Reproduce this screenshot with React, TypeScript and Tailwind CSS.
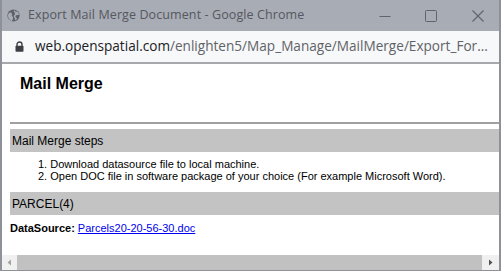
import React from "react";

export default function App() {
  return (
    <div className="w-[501px] h-[271px] flex flex-col overflow-hidden border-l-2 border-r-2 border-b border-[#8e9198] bg-white">
      {/* Title bar */}
      <div className="h-[31px] shrink-0 bg-[#a8acb5] flex items-center" style={{ fontFamily: '"Open Sans", "Noto Sans", sans-serif' }}>
        <svg width="13" height="13" viewBox="0 0 16 16" className="ml-[5px] shrink-0">
          <circle cx="8" cy="8" r="7.5" fill="#5e6269" />
          <path d="M3 4.5 C5 4 6.5 5 6 7 C5.5 8.5 7 9 7.5 10.5 C7.8 12 6.5 13.5 6 15 C3 14 1 11 1.2 7.5 C1.5 6 2.2 5 3 4.5 Z" fill="#a8acb5" />
          <path d="M9 1.2 C9.5 3 11 3.5 12.5 3.2 C13.5 4 14.5 5.5 14.8 7 C13 7.5 11.5 7 10.5 8.5 C10 10 11.5 11 12.5 11.5 C12 12.5 11 13.5 10 14.2 C10.5 12 9 11 8.5 9.5 C8 8 9.5 7 10 6 C10.5 5 9 4 8.5 3 C8.3 2.3 8.5 1.6 9 1.2 Z" fill="#a8acb5" />
        </svg>
        <span className="ml-[8px] text-[12.5px] text-[#55585e] tracking-[0.1px] whitespace-nowrap">Export Mail Merge Document - Google Chrome</span>
        <div className="ml-auto flex items-center shrink-0">
          <svg width="12" height="12" viewBox="0 0 12 12" className="mr-[34px]">
            <line x1="0.5" y1="6.5" x2="11.5" y2="6.5" stroke="#5f636a" strokeWidth="1" />
          </svg>
          <svg width="12" height="12" viewBox="0 0 12 12" className="mr-[35px]">
            <rect x="0.5" y="0.5" width="11" height="11" rx="1" fill="none" stroke="#5f636a" strokeWidth="1" />
          </svg>
          <svg width="12" height="12" viewBox="0 0 12 12" className="mr-[15px]">
            <line x1="0.5" y1="0.5" x2="11.5" y2="11.5" stroke="#5f636a" strokeWidth="1.1" />
            <line x1="11.5" y1="0.5" x2="0.5" y2="11.5" stroke="#5f636a" strokeWidth="1.1" />
          </svg>
        </div>
      </div>
      {/* Address bar */}
      <div className="h-[33px] shrink-0 bg-[#f7f8f9] border-b-2 border-[#a6a8ab] flex items-center overflow-hidden" style={{ fontFamily: '"Open Sans", "Noto Sans", sans-serif' }}>
        <svg width="9" height="11" viewBox="0 0 9 11" className="ml-[13px] shrink-0">
          <path d="M2 5 V3.5 A2.5 2.5 0 0 1 7 3.5 V5" fill="none" stroke="#3c3f43" strokeWidth="1.4" />
          <rect x="0.5" y="4.8" width="8" height="6" rx="0.8" fill="#3c3f43" />
        </svg>
        <span className="ml-[11px] text-[13.6px] whitespace-nowrap">
          <span className="text-[#202124]">web.openspatial.com</span>
          <span className="text-[#5f6368]">/enlighten5/Map_Manage/MailMerge/Export_For...</span>
        </span>
      </div>
      {/* Content */}
      <div className="flex-1 flex flex-col text-black" style={{ fontFamily: '"Liberation Sans", Arial, sans-serif' }}>
        <div className="pl-[18px] pt-[10px] text-[16px] font-bold leading-[20px]">Mail Merge</div>
        <div className="ml-[8px] mt-[28px] h-[2px] bg-[#a0a0a0]" />
        <div className="ml-[8px] mt-[5px] h-[23px] bg-[#c3c3c3] flex items-center pl-[2px] text-[12px]">Mail Merge steps</div>
        <ol className="mt-[6px] pl-[36px] text-[11px] leading-[12px] list-decimal list-inside">
          <li>Download datasource file to local machine.</li>
          <li>Open DOC file in software package of your choice (For example Microsoft Word).</li>
        </ol>
        <div className="ml-[8px] mt-[10px] h-[23px] bg-[#c3c3c3] flex items-center pl-[2px] text-[12px]">PARCEL(4)</div>
        <div className="ml-[8px] mt-[7px] text-[11px] leading-[13px]">
          <span className="font-bold">DataSource:</span>{" "}
          <a href="#" className="text-[#0000ee] underline">Parcels20-20-56-30.doc</a>
        </div>
      </div>
      {/* Horizontal scrollbar */}
      <div className="h-[15px] shrink-0 bg-[#f0f0f0] flex items-center">
        <div className="w-[15px] h-full flex items-center justify-center">
          <svg width="5" height="7" viewBox="0 0 5 7"><path d="M4 0.5 L0.5 3.5 L4 6.5 Z" fill="#a3a3a3" /></svg>
        </div>
        <div className="flex-1 h-[15px] bg-[#c1c1c1]" />
        <div className="w-[17px] h-full flex items-center justify-center">
          <svg width="5" height="7" viewBox="0 0 5 7"><path d="M1 0.5 L4.5 3.5 L1 6.5 Z" fill="#505050" /></svg>
        </div>
      </div>
    </div>
  );
}
